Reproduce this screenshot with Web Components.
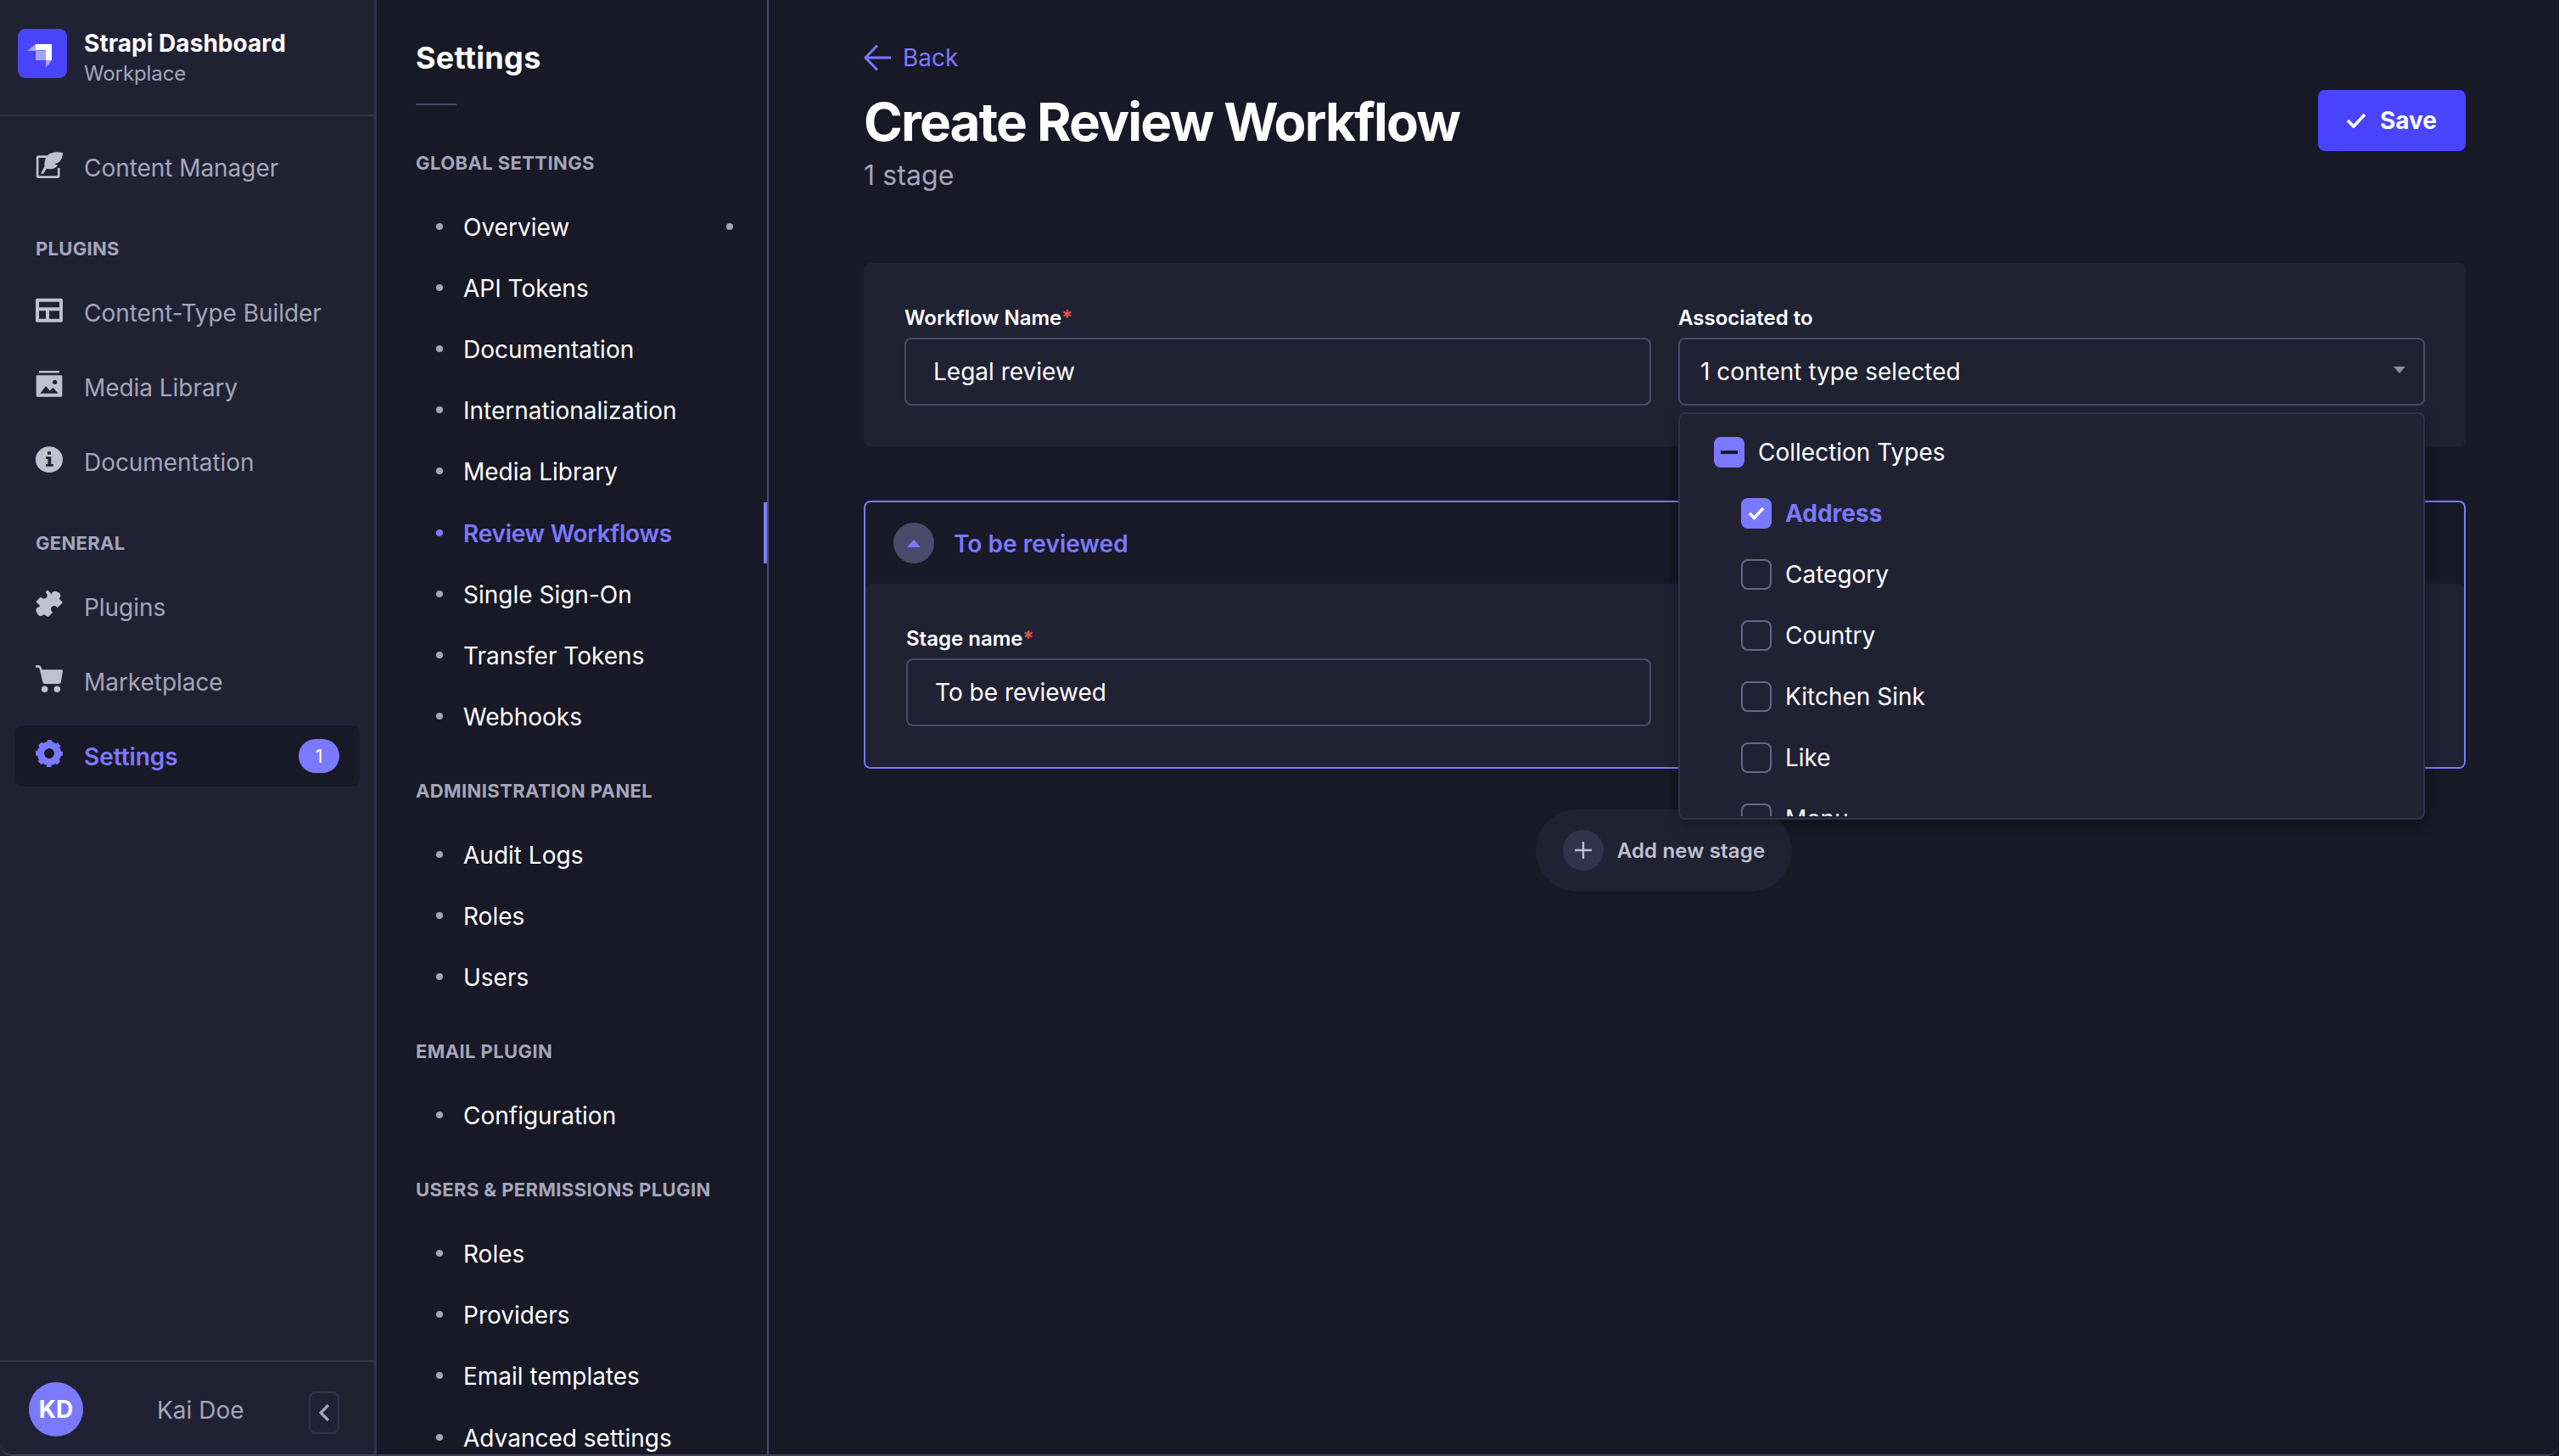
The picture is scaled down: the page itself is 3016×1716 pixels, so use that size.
<!DOCTYPE html>
<html lang="en">
<head>
<meta charset="utf-8">
<title>Create Review Workflow</title>
<style>
html, body { margin: 0; padding: 0; height: 100%; background: #181826; }
body { font-family: Inter, "Liberation Sans", sans-serif; color: #fff; overflow: hidden; }
</style>
</head>
<body>
<app-shell>
  <main-nav slot="nav"></main-nav>
  <settings-nav slot="sub">
    <settings-group label="Global Settings">
      <settings-link dot>Overview</settings-link>
      <settings-link>API Tokens</settings-link>
      <settings-link>Documentation</settings-link>
      <settings-link>Internationalization</settings-link>
      <settings-link>Media Library</settings-link>
      <settings-link active>Review Workflows</settings-link>
      <settings-link>Single Sign-On</settings-link>
      <settings-link>Transfer Tokens</settings-link>
      <settings-link>Webhooks</settings-link>
    </settings-group>
    <settings-group label="Administration Panel">
      <settings-link>Audit Logs</settings-link>
      <settings-link>Roles</settings-link>
      <settings-link>Users</settings-link>
    </settings-group>
    <settings-group label="Email Plugin">
      <settings-link>Configuration</settings-link>
    </settings-group>
    <settings-group label="Users &amp; Permissions Plugin">
      <settings-link>Roles</settings-link>
      <settings-link>Providers</settings-link>
      <settings-link>Email templates</settings-link>
      <settings-link>Advanced settings</settings-link>
    </settings-group>
  </settings-nav>
  <workflow-page></workflow-page>
</app-shell>

<script>
const ICONS = {
  feather: '<path fill="none" stroke="currentColor" stroke-width="2" d="M11 5H2.600a1 1 0 0 0-1 1v16a1 1 0 0 0 1 1h16.800a1 1 0 0 0 1-1v-7"/><path fill="currentColor" d="M24 1.500c-5.500-1.300-11.500-.5-14 3-2 2.800-2.200 6.500-2.200 9L4.500 20h2.400l2.700-4.400c3 .7 6.500.3 8.700-1.600.8-.8 1.200-1.700 1.200-1.700l-3.200-.6 4-1.500C22.800 8 24 5 24 1.500z"/>',
  layout: '<path fill="currentColor" fill-rule="evenodd" d="M1.500 2h21A1.500 1.500 0 0 1 24 3.500v18a1.500 1.500 0 0 1-1.500 1.500h-21A1.500 1.500 0 0 1 0 21.500v-18A1.500 1.500 0 0 1 1.500 2zM3 5v5h18V5zm0 8v7h6v-7zm9 0v7h9v-7z"/>',
  media: '<path fill="currentColor" fill-rule="evenodd" d="M3 0h18v1.800H3zM1.500 4h21A1 1 0 0 1 23.500 5v17a1 1 0 0 1-1 1h-21a1 1 0 0 1-1-1V5a1 1 0 0 1 1-1zM4 20h16l-4.500-5-3 2.500L9 13.500zM17 8a2 2 0 1 0 0 4 2 2 0 0 0 0-4z"/>',
  info: '<path fill="currentColor" fill-rule="evenodd" d="M12 1a12 11.500 0 1 1 0 23 12 11.500 0 0 1 0-23zM10.500 5.500v2.600h3V5.500zM9 10v2h1.800v4.500H9v2h6.500v-2h-1.800V10z"/>',
  puzzle: '<path fill="currentColor" d="M14 3.300a3.100 3.100 0 0 1 5.200-1.900 3.100 3.100 0 0 1 2 5.100 1 1 0 0 0 .2 1.400l1.900 1.900a1 1 0 0 1 0 1.400l-3.300 3.300a1 1 0 0 1-1.500-.1 2.900 2.900 0 1 0-4.100 4.100 1 1 0 0 1 .1 1.500l-2.900 2.900a1 1 0 0 1-1.400 0L8 21.600a1 1 0 0 0-1.500.1 3.200 3.200 0 0 1-5.300-2 3.100 3.100 0 0 1 1.800-5.200 1 1 0 0 0 .3-1.600L.9 10.500a1 1 0 0 1 0-1.400l2.900-2.900a1 1 0 0 1 1.500.1 2.900 2.900 0 1 0 4.100-4.100 1 1 0 0 1-.1-1.500l.5-.5a1 1 0 0 1 1.400 0l2.100 2.100a.2.200 0 0 0 .7.400z"/>',
  cart: '<path fill="currentColor" d="M0 0h2.400c1.200 0 2.200.7 2.600 1.900L5.500 4H23a1 1 0 0 1 1 1.200l-1.600 9.600a2 2 0 0 1-2 1.700H8.200a2 2 0 0 1-2-1.600L3.400 3c-.2-.7-.5-1-1.200-1H0z"/><circle fill="currentColor" cx="8" cy="21.200" r="2.800"/><circle fill="currentColor" cx="19" cy="21.200" r="2.800"/>',
  gear: '<circle cx="12" cy="12" r="7.500" fill="none" stroke="currentColor" stroke-width="6"/><circle cx="12" cy="12" r="10.300" fill="none" stroke="currentColor" stroke-width="3.400" stroke-dasharray="4.090 3.999" stroke-dashoffset="2"/>'
};

const LOGO = '<svg viewBox="0 0 58 58" width="58" height="58"><rect width="58" height="58" rx="9" fill="#4945ff"/><path fill="#fff" d="M21 18h19v19h-7V25H21z"/><path fill="#fff" opacity=".5" d="M21 18v8H11zM33 37h7l-7 9zM21 25.500h12V37H21z"/></svg>';

class UiIcon extends HTMLElement {
  constructor() {
    super();
    const size = this.getAttribute('size') || 32;
    const root = this.attachShadow({ mode: 'open' });
    root.innerHTML = `<style>:host{display:block;width:${size}px;height:${size}px;flex:none}svg{display:block}</style>
      <svg viewBox="0 0 24 24" width="${size}" height="${size}">${ICONS[this.getAttribute('name')] || ''}</svg>`;
  }
}
customElements.define('ui-icon', UiIcon);

const shellTpl = document.createElement('template');
shellTpl.innerHTML = `
<style>
:host { display: grid; grid-template-columns: 444px 462px 1fr; height: 1716px; overflow: hidden; position: relative; }
.corner { position: absolute; left: 0; right: 0; bottom: 0; height: 14px; border-bottom: 2px solid #4a4a6a; border-bottom-left-radius: 14px; border-bottom-right-radius: 14px; pointer-events: none; opacity: .75; }
</style>
<slot name="nav"></slot><slot name="sub"></slot><slot></slot>
<div class="corner"></div>`;
class AppShell extends HTMLElement {
  constructor() {
    super();
    this.attachShadow({ mode: 'open' }).appendChild(shellTpl.content.cloneNode(true));
  }
}
customElements.define('app-shell', AppShell);

const navItemTpl = document.createElement('template');
navItemTpl.innerHTML = `
<style>
:host { display: flex; align-items: center; height: 72px; box-sizing: border-box; margin: 0 17px 0 18px; padding: 0 24px; border-radius: 8px; color: #a5a5ba; font-size: 28px; line-height: 36px; position: relative; }
:host([active]) { background: #181826; color: #7b79ff; font-weight: 600; }
.icon { color: #c0c0cf; display: flex; margin-top: -6px; }
:host([active]) .icon { color: #7b79ff; }
.label { margin-left: 25px; padding-top: 1px; letter-spacing: -.05px; }
.badge { display: none; position: absolute; right: 24px; top: 16px; width: 48px; height: 40px; border-radius: 20px; background: #7b79ff; color: #fff; font-size: 22px; line-height: 40px; text-align: center; font-weight: 400; }
:host([badge]) .badge { display: block; }
</style>
<span class="icon"><slot name="icon"></slot></span><span class="label"><slot></slot></span><span class="badge"></span>`;
class NavItem extends HTMLElement {
  constructor() {
    super();
    const root = this.attachShadow({ mode: 'open' });
    root.appendChild(navItemTpl.content.cloneNode(true));
    root.querySelector('.badge').textContent = this.getAttribute('badge') || '';
  }
}
customElements.define('nav-item', NavItem);

const mainNavTpl = document.createElement('template');
mainNavTpl.innerHTML = `
<style>
:host { display: flex; flex-direction: column; background: #212134; border-right: 3px solid #32324d; box-sizing: border-box; height: 1716px; }
header { box-sizing: border-box; border-bottom: 2px solid #32324d; height: 137px; display: flex; align-items: flex-start; padding: 34px 0 0 21px; gap: 20px; }
.brand b { display: block; font-size: 28px; line-height: 36px; font-weight: 700; color: #fff; margin-top: -1px; letter-spacing: .05px; }
.brand span { display: block; font-size: 24px; line-height: 30px; color: #a5a5ba; margin-top: 3px; letter-spacing: -.1px; }
h4 { margin: 46px 0 25px 42px; font-size: 22px; line-height: 28px; font-weight: 700; letter-spacing: .3px; color: #a5a5ba; text-transform: uppercase; }
.list { display: flex; flex-direction: column; gap: 16px; }
.first { margin-top: 24px; }
footer { margin-top: auto; height: 113px; box-sizing: border-box; border-top: 2px solid #32324d; display: flex; align-items: flex-start; position: relative; }
.avatar { width: 64px; height: 64px; border-radius: 50%; background: #7b79ff; color: #fff; font-size: 28px; font-weight: 700; line-height: 64px; text-align: center; margin: 24px 0 0 34px; }
.user { margin: 39px 0 0 87px; font-size: 28px; line-height: 36px; color: #a5a5ba; }
.collapse { position: absolute; left: 364px; top: 35px; width: 36px; height: 50px; box-sizing: border-box; border: 2px solid #32324d; border-radius: 8px; display: flex; align-items: center; justify-content: center; color: #a5a5ba; }
</style>
<header>${LOGO}<div class="brand"><b>Strapi Dashboard</b><span>Workplace</span></div></header>
<div class="list first">
  <nav-item><ui-icon slot="icon" name="feather"></ui-icon>Content Manager</nav-item>
</div>
<h4>Plugins</h4>
<div class="list">
  <nav-item><ui-icon slot="icon" name="layout"></ui-icon>Content-Type Builder</nav-item>
  <nav-item><ui-icon slot="icon" name="media"></ui-icon>Media Library</nav-item>
  <nav-item><ui-icon slot="icon" name="info"></ui-icon>Documentation</nav-item>
</div>
<h4>General</h4>
<div class="list">
  <nav-item><ui-icon slot="icon" name="puzzle"></ui-icon>Plugins</nav-item>
  <nav-item><ui-icon slot="icon" name="cart"></ui-icon>Marketplace</nav-item>
  <nav-item active badge="1"><ui-icon slot="icon" name="gear"></ui-icon>Settings</nav-item>
</div>
<footer>
  <div class="avatar">KD</div>
  <div class="user">Kai Doe</div>
  <div class="collapse"><svg width="14" height="22" viewBox="0 0 14 22"><path d="M12 2 3 11l9 9" fill="none" stroke="currentColor" stroke-width="3.200"/></svg></div>
</footer>`;
class MainNav extends HTMLElement {
  constructor() {
    super();
    this.attachShadow({ mode: 'open' }).appendChild(mainNavTpl.content.cloneNode(true));
  }
}
customElements.define('main-nav', MainNav);

const settingsNavTpl = document.createElement('template');
settingsNavTpl.innerHTML = `
<style>
:host { display: block; background: #181826; border-right: 2px solid #4a4a6a; box-sizing: border-box; height: 1716px; overflow: hidden; }
h2 { margin: 46px 0 0 46px; font-size: 36px; line-height: 44px; font-weight: 700; letter-spacing: .3px; color: #fff; }
.rule { width: 48px; height: 2px; background: #4a4a6a; margin: 32px 0 0 46px; }
.groups { margin-top: 54px; }
</style>
<h2>Settings</h2>
<div class="rule"></div>
<div class="groups"><slot></slot></div>`;
class SettingsNav extends HTMLElement {
  constructor() {
    super();
    this.attachShadow({ mode: 'open' }).appendChild(settingsNavTpl.content.cloneNode(true));
  }
}
customElements.define('settings-nav', SettingsNav);

const settingsGroupTpl = document.createElement('template');
settingsGroupTpl.innerHTML = `
<style>
:host { display: block; margin-bottom: 37px; }
h5 { margin: 0 0 26px 46px; font-size: 22px; line-height: 28px; font-weight: 700; letter-spacing: .4px; color: #a5a5ba; text-transform: uppercase; }
</style>
<h5></h5><slot></slot>`;
class SettingsGroup extends HTMLElement {
  constructor() {
    super();
    const root = this.attachShadow({ mode: 'open' });
    root.appendChild(settingsGroupTpl.content.cloneNode(true));
    root.querySelector('h5').textContent = this.getAttribute('label');
  }
}
customElements.define('settings-group', SettingsGroup);

const settingsLinkTpl = document.createElement('template');
settingsLinkTpl.innerHTML = `
<style>
:host { display: flex; align-items: center; height: 72.1px; padding-left: 70px; color: #fff; font-size: 28px; line-height: 36px; position: relative; }
:host([active]) { color: #7b79ff; font-weight: 600; letter-spacing: -.25px; }
:host([active])::after { content: ""; position: absolute; right: 0; top: 0; width: 4px; height: 72px; background: #7b79ff; }
.bullet, .dot { width: 8px; height: 8px; border-radius: 50%; background: #a5a5ba; }
.bullet { margin-right: 24px; margin-top: -2px; }
:host([active]) .bullet { background: #7b79ff; }
.dot { display: none; position: absolute; left: 412px; top: 31px; }
:host([dot]) .dot { display: block; }
</style>
<span class="bullet"></span><span><slot></slot></span><span class="dot"></span>`;
class SettingsLink extends HTMLElement {
  constructor() {
    super();
    this.attachShadow({ mode: 'open' }).appendChild(settingsLinkTpl.content.cloneNode(true));
  }
}
customElements.define('settings-link', SettingsLink);

const fieldTpl = document.createElement('template');
fieldTpl.innerHTML = `
<style>
:host { display: block; position: relative; min-width: 0; }
label { display: block; font-size: 24px; line-height: 30px; font-weight: 600; color: #fff; margin: 2px 0 8px; }
label i { font-style: normal; color: #e0594d; display: none; }
:host([required]) label i { display: inline; }
.box { height: 80px; box-sizing: border-box; border: 2px solid #4a4a6a; border-radius: 8px; padding: 0 32px; display: flex; align-items: center; justify-content: space-between; font-size: 28px; color: #fff; }
:host([select]) .box { padding: 0 24px; }
.caret { width: 0; height: 0; border: 7px solid transparent; border-top: 8px solid #8e8ea9; border-bottom: 0; margin: -4px -3px 0 0; display: none; }
:host([select]) .caret { display: block; }
</style>
<label><span class="lab"></span><i>*</i></label>
<div class="box"><span class="val"></span><span class="caret"></span></div>
<slot></slot>`;
class FormField extends HTMLElement {
  constructor() {
    super();
    const root = this.attachShadow({ mode: 'open' });
    root.appendChild(fieldTpl.content.cloneNode(true));
    root.querySelector('.lab').textContent = this.getAttribute('label');
    root.querySelector('.val').textContent = this.getAttribute('value');
  }
}
customElements.define('form-field', FormField);

const checkTpl = document.createElement('template');
checkTpl.innerHTML = `
<style>
:host { display: flex; align-items: center; height: 72px; flex: none; color: #fff; font-size: 28px; gap: 16px; }
:host([child]) { padding-left: 32px; }
.box { width: 36px; height: 36px; box-sizing: border-box; border: 2px solid #666687; border-radius: 8px; display: flex; align-items: center; justify-content: center; flex: none; }
:host([state]) .box { background: #7b79ff; border-color: #7b79ff; }
:host([state="on"]) { color: #7b79ff; font-weight: 700; }
</style>
<span class="box"></span><span><slot></slot></span>`;
class CheckRow extends HTMLElement {
  constructor() {
    super();
    const root = this.attachShadow({ mode: 'open' });
    root.appendChild(checkTpl.content.cloneNode(true));
    const state = this.getAttribute('state');
    if (state === 'on') root.querySelector('.box').innerHTML = '<svg width="22" height="18" viewBox="0 0 22 18"><path d="M3 9l5.500 5.500L19 3" fill="none" stroke="#fff" stroke-width="3.400"/></svg>';
    if (state === 'some') root.querySelector('.box').innerHTML = '<svg width="20" height="4" viewBox="0 0 20 4"><rect width="20" height="4" fill="#181826"/></svg>';
  }
}
customElements.define('check-row', CheckRow);

const menuTpl = document.createElement('template');
menuTpl.innerHTML = `
<style>
:host { display: block; position: absolute; left: 0; right: 0; top: 128px; height: 480px; box-sizing: border-box; background: #212134; border: 2px solid #32324d; border-radius: 8px; box-shadow: 0 4px 16px rgba(3,3,5,.35); z-index: 5; overflow: hidden; }
.scroll { display: flex; flex-direction: column; height: 474px; overflow: hidden; padding: 9px 0 0 40px; box-sizing: border-box; }
</style>
<div class="scroll"><slot></slot></div>`;
class DropMenu extends HTMLElement {
  constructor() {
    super();
    this.attachShadow({ mode: 'open' }).appendChild(menuTpl.content.cloneNode(true));
  }
}
customElements.define('drop-menu', DropMenu);

const pageTpl = document.createElement('template');
pageTpl.innerHTML = `
<style>
:host { display: block; padding: 0 110px 0 112px; height: 1716px; box-sizing: border-box; overflow: hidden; background: #181826; }
.back { display: flex; align-items: center; gap: 14px; color: #7b79ff; font-size: 28px; line-height: 36px; padding-top: 50px; height: 36px; }
.head { display: flex; justify-content: space-between; align-items: flex-start; }
h1 { margin: 20px 0 0; font-size: 62px; line-height: 76px; font-weight: 700; letter-spacing: -1.850px; color: #fff; }
.sub { font-size: 32px; line-height: 40px; color: #a5a5ba; margin-top: 5px; letter-spacing: .1px; }
.save { display: flex; align-items: center; gap: 16px; height: 72px; box-sizing: border-box; padding: 0 34px 0 33px; margin-top: 20px; background: #4945ff; border-radius: 8px; font-size: 28px; font-weight: 700; color: #fff; }
.panel { margin-top: 83px; background: #212134; border-radius: 8px; padding: 48px; height: 216px; box-sizing: border-box; display: grid; grid-template-columns: 880px 880px; gap: 32px; position: relative; z-index: 3; }
.card { margin-top: 64px; height: 316px; box-sizing: border-box; border: 2px solid #7b79ff; border-radius: 8px; background: #181826; overflow: hidden; }
.card-head { height: 96px; display: flex; align-items: center; padding-left: 33px; gap: 23px; color: #7b79ff; font-size: 28px; font-weight: 600; }
.chev { width: 48px; height: 48px; border-radius: 50%; background: #4a4a6a; display: flex; align-items: center; justify-content: center; }
.chev span { width: 0; height: 0; border: 8px solid transparent; border-bottom: 9px solid #7b79ff; border-top: 0; }
.card-title { padding-top: 1px; letter-spacing: .05px; }
.card-body { height: 216px; background: #212134; padding: 48px 48px; box-sizing: border-box; display: grid; grid-template-columns: 878px 1fr; gap: 33px; border-radius: 6px 6px 0 0; }
.add { display: flex; justify-content: center; margin-top: 48px; }
.pill { display: flex; align-items: center; height: 96px; padding: 0 32px; gap: 16px; border-radius: 48px; background: #212134; color: #c0c0cf; font-size: 24px; font-weight: 600; letter-spacing: .15px; position: relative; left: -1px; }
.plus { width: 48px; height: 48px; border-radius: 50%; background: #32324d; display: flex; align-items: center; justify-content: center; }
</style>
<div class="back"><svg width="32" height="32" viewBox="0 0 32 32"><path d="M32 16H3M16 1.500 2 16l14 14.500" fill="none" stroke="currentColor" stroke-width="3"/></svg><span>Back</span></div>
<div class="head">
  <div>
    <h1>Create Review Workflow</h1>
    <div class="sub">1 stage</div>
  </div>
  <div class="save"><svg width="24" height="18" viewBox="0 0 24 18"><path d="M2 9l7 7L22 2" fill="none" stroke="#fff" stroke-width="3.600"/></svg><span>Save</span></div>
</div>
<div class="panel">
  <form-field label="Workflow Name" value="Legal review" required></form-field>
  <form-field label="Associated to" value="1 content type selected" select>
    <drop-menu>
      <check-row state="some">Collection Types</check-row>
      <check-row child state="on">Address</check-row>
      <check-row child>Category</check-row>
      <check-row child>Country</check-row>
      <check-row child>Kitchen Sink</check-row>
      <check-row child>Like</check-row>
      <check-row child>Menu</check-row>
    </drop-menu>
  </form-field>
</div>
<div class="card">
  <div class="card-head"><div class="chev"><span></span></div><div class="card-title">To be reviewed</div></div>
  <div class="card-body">
    <form-field label="Stage name" value="To be reviewed" required></form-field>
  </div>
</div>
<div class="add"><div class="pill"><div class="plus"><svg width="20" height="20" viewBox="0 0 20 20"><path d="M10 0v20M0 10h20" stroke="#c0c0cf" stroke-width="2.400"/></svg></div><span>Add new stage</span></div></div>`;
class WorkflowPage extends HTMLElement {
  constructor() {
    super();
    this.attachShadow({ mode: 'open' }).appendChild(pageTpl.content.cloneNode(true));
  }
}
customElements.define('workflow-page', WorkflowPage);
</script>
</body>
</html>
